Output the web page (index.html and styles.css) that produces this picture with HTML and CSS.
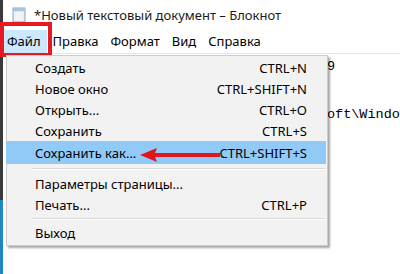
FILE: index.html
```html
<!DOCTYPE html>
<html lang="ru">
<head>
  <meta charset="UTF-8">
  <meta name="viewport" content="width=device-width, initial-scale=1.0">
  <title>Блокнот</title>
  <link rel="stylesheet" href="styles.css">
</head>
<body>
  <div class="screen">
    <div class="backdrop"></div>
    <div class="window">
      <div class="titlebar">
        <svg class="app-icon" width="14" height="16" viewBox="0 0 14 16">
          <rect x="1" y="1" width="12" height="14" fill="#dfe9f1" stroke="#8fa6b8" stroke-width="1"/>
          <rect x="1" y="1" width="12" height="3" fill="#a9c4d8"/>
          <rect x="2.5" y="5" width="9" height="9" fill="#eef4f8"/>
        </svg>
        <span class="title">*Новый текстовый документ – Блокнот</span>
      </div>

      <div class="menubar">
        <span class="menubar-item active">Файл</span>
        <span class="menubar-item">Правка</span>
        <span class="menubar-item">Формат</span>
        <span class="menubar-item">Вид</span>
        <span class="menubar-item">Справка</span>
      </div>

      <div class="editor">
        <div class="line">Номер сборки: 10.0.17763.1 от 15.09.2019</div>
        <div class="line"> </div>
        <div class="line">Папка с ярлыками: C:\ProgramData\Microsoft\Windows\Start Menu\Programs</div>
      </div>
    </div>
  </div>

  <div class="highlight-box"></div>

  <div class="dropdown">
    <div class="item"><span>Создать</span><span class="key">CTRL+N</span></div>
    <div class="item"><span>Новое окно</span><span class="key">CTRL+SHIFT+N</span></div>
    <div class="item"><span>Открыть...</span><span class="key">CTRL+O</span></div>
    <div class="item"><span>Сохранить</span><span class="key">CTRL+S</span></div>
    <div class="item selected"><span>Сохранить как...</span><span class="key">CTRL+SHIFT+S</span></div>
    <div class="separator"></div>
    <div class="item"><span>Параметры страницы...</span><span class="key"></span></div>
    <div class="item"><span>Печать...</span><span class="key">CTRL+P</span></div>
    <div class="separator short"></div>
    <div class="item"><span>Выход</span><span class="key"></span></div>
  </div>

  <svg class="arrow" width="80" height="16" viewBox="0 0 80 16">
    <path d="M0 8 L17 1 L15 6 L80 6 L80 10 L15 10 L17 15 Z" fill="#e2141c"/>
  </svg>
</body>
</html>
```

FILE: styles.css
```css
body {
  margin: 0;
  width: 400px;
  height: 274px;
  overflow: hidden;
  background-color: white;
  font-family: "Noto Sans", "Open Sans", sans-serif;
  color: #000;
}
.screen {
  display: flex;
  height: 274px;
}
.backdrop {
  width: 3px;
  flex-shrink: 0;
  background: linear-gradient(#3a3a3a 0, #3a3a3a 200px, #1f86c4 200px);
}
.window {
  flex: 1;
  background-color: white;
  overflow: hidden;
}
.titlebar {
  height: 30px;
  display: flex;
  align-items: center;
  padding-left: 9px;
}
.app-icon {
  margin-right: 8px;
}
.title {
  font-size: 13px;
  color: #1a1a1a;
}
.menubar {
  height: 23px;
  display: flex;
  border-bottom: 1px solid #e6e6e6;
}
.menubar-item {
  font-size: 13px;
  line-height: 22px;
  padding: 0 6px;
}
.menubar-item.active {
  background-color: #cce8ff;
  padding: 0 6px 0 4px;
}
.editor {
  padding: 1px 0 0 8px;
  font-family: "Liberation Mono", monospace;
  font-size: 13.5px;
}
.line {
  white-space: pre;
  line-height: 24px;
  height: 24px;
}
.highlight-box {
  position: absolute;
  left: 0;
  top: 22px;
  width: 44px;
  height: 27px;
  border: 4px solid #e51a22;
}
.dropdown {
  position: absolute;
  left: 6px;
  top: 55px;
  width: 320px;
  padding: 1px 0 2px;
  background-color: #f2f2f2;
  border: 1px solid #cccccc;
  box-shadow: 2px 2px 2px rgba(0, 0, 0, 0.35);
  font-size: 13px;
}
.item {
  height: 21px;
  display: flex;
  align-items: center;
  justify-content: space-between;
  padding: 0 20px 0 28px;
}
.item.selected {
  height: 23px;
  background-color: #91c9f7;
  margin: 0 1px 0 -1px;
  padding: 0 19px 0 29px;
}
.separator {
  height: 1px;
  margin: 4px 2px 3px 25px;
  background-color: #d7d7d7;
  border-bottom: 1px solid #ffffff;
}
.separator.short {
  margin: 3px 2px 2px 25px;
}
.arrow {
  position: absolute;
  left: 140px;
  top: 147px;
}
```
